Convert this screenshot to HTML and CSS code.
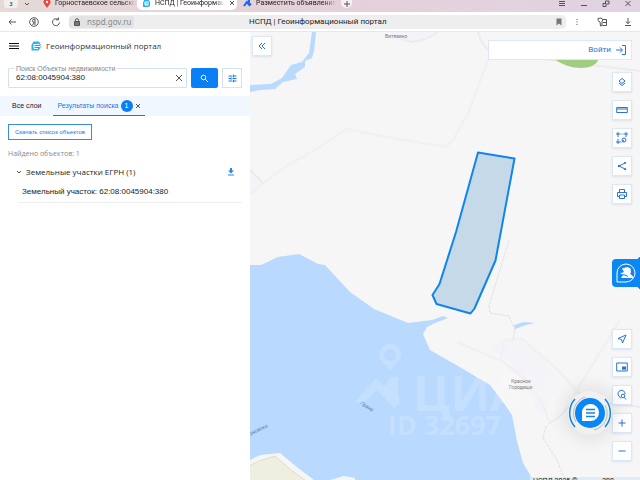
FILE: index.html
```html
<!DOCTYPE html>
<html lang="ru">
  <head>
    <meta charset="UTF-8" />
    <meta name="viewport" content="width=device-width, initial-scale=1.0" />
    <title>НСПД | Геоинформационный портал</title>
    <link rel="stylesheet" href="styles.css">
  </head>
  <body>
    <div class="tab-strip">
      <button class="tab-count">3</button>
      <button class="tab-list" aria-label="Список вкладок">
        <svg width="6" height="6" viewBox="0 0 6 6"><path d="M1 2l2 2 2-2" /></svg>
      </button>
      <div class="browser-tab first">
        <svg class="favicon" width="8" height="9" viewBox="0 0 8 9"><path fill="#f0443a" d="M4 9L1.600 5.500A3.400 3.400 0 1 1 6.400 5.500z" /><circle cx="4" cy="3" r="1.200" fill="#fff" /></svg>
        <span>Горностаевское сельско</span>
      </div>
      <div class="browser-tab current">
        <svg class="favicon" width="9" height="9" viewBox="0 0 9 9"><path fill="#27b5ee" d="M2 1h5l1 2v4L6 8H1V4z" /><path stroke="#fff" fill="none" d="M3 3h4M3 5h4M3 3v3h3" /></svg>
        <span>НСПД | Геоинформац</span>
        <button aria-label="Закрыть вкладку"><svg width="6" height="6" viewBox="0 0 6 6"><path d="M1 1l4 4M5 1l-4 4" /></svg></button>
      </div>
      <div class="browser-tab last">
        <svg class="favicon" width="9" height="9" viewBox="0 0 9 9"><path fill="none" stroke="#1769f5" stroke-width="2" d="M1 7l3-4 3 4M6 1v3l2 2" /></svg>
        <span>Разместить объявление</span>
      </div>
      <button class="new-tab" aria-label="Новая вкладка"><svg width="8" height="8" viewBox="0 0 8 8"><path d="M4 1v6M1 4h6" /></svg></button>
      <div class="window-buttons">
        <button aria-label="Меню"><svg width="8" height="8" viewBox="0 0 8 8"><path d="M1 1.500h6M1 3.500h6M1 5.500h6" /></svg></button>
        <button aria-label="Свернуть"><svg width="8" height="8" viewBox="0 0 8 8"><path d="M1 5.500h6" /></svg></button>
        <button aria-label="Окно"><svg width="8" height="8" viewBox="0 0 8 8"><path d="M1 3.500h3v3H1zM3.500 3V1H7v3H4.500" /></svg></button>
        <button aria-label="Закрыть"><svg width="8" height="8" viewBox="0 0 8 8"><path d="M1.500 1l5 5M6.500 1l-5 5" /></svg></button>
      </div>
    </div>

    <div class="toolbar">
      <button aria-label="Назад"><svg width="10" height="10" viewBox="0 0 10 10"><path d="M9 5H2M4.500 2.500L2 5l2.500 2.500" /></svg></button>
      <button aria-label="Яндекс"><svg width="10" height="10" viewBox="0 0 10 10"><circle cx="5" cy="5" r="4.300" /><path d="M6 8V2.300H5a1.500 1.500 0 0 0 0 3h1M5 5.300L3.600 8" /></svg></button>
      <button aria-label="Обновить"><svg width="10" height="10" viewBox="0 0 10 10"><path d="M8.500 5.500A3.500 3.500 0 1 1 7 2.300M7.500 0.500v2.300H5" /></svg></button>
      <div class="address">
        <div class="host">
          <svg width="8" height="8" viewBox="0 0 8 8"><path fill="#777" d="M1.500 3.500h5V7.500h-5z" /><path d="M2.500 4V2.200a1.500 1.500 0 0 1 3 0V4" /></svg>
          <input type="text" value="nspd.gov.ru" aria-label="Адрес">
        </div>
        <span class="page-title">НСПД | Геоинформационный портал</span>
        <svg class="bookmark" width="6" height="8" viewBox="0 0 6 8"><path d="M0.500 0.500h5v7L3 5.500.5 7.500z" /></svg>
      </div>
      <button aria-label="Ещё"><svg width="8" height="8" viewBox="0 0 8 8"><path class="dots" d="M3.500 1h1v1h-1zM3.500 3.500h1v1h-1zM3.500 6h1v1h-1z" /></svg></button>
      <button class="extensions" aria-label="Расширения"><svg width="11" height="10" viewBox="0 0 11 10"><path d="M1 1.500l3-.5 2 1.500-1 2v4L3.500 9 3 5 1 3.500zM6 2.500h3.500v6H5.500M6 5.500h3.500" /></svg></button>
      <button aria-label="Загрузки"><svg width="8" height="8" viewBox="0 0 8 8"><path d="M4 0v5.500M1.800 3.500L4 5.700l2.200-2.200M1 7.500h6" /></svg></button>
    </div>

    <div class="portal">
      <aside class="sidebar">
        <header class="brand">
          <button aria-label="Меню"><svg class="burger" width="10" height="8" viewBox="0 0 10 8"><path d="M0 1.500h10M0 4h10M0 6.500h10" /></svg></button>
          <svg class="logo" width="10" height="10" viewBox="0 0 10 10"><path fill="#24baf0" d="M2.500.5H8L9.500 3v4L7.500 9.500H.5V4z" /><path fill="none" stroke="#fff" d="M3 3.500h5.500M3.500 5.500H9M3 3v4.500h4" /><path fill="none" stroke="#188be8" stroke-width=".6" d="M4.500 4.500h4M4.500 6.500h3.500" /></svg>
          <h1>Геоинформационный портал</h1>
        </header>

        <form class="search">
          <div class="search-field">
            <label for="query">Поиск Объекты недвижимости</label>
            <input id="query" type="text" value="62:08:0045904:380">
            <button type="button" aria-label="Очистить"><svg width="8" height="8" viewBox="0 0 8 8"><path d="M1 1l6 6M7 1L1 7" /></svg></button>
          </div>
          <button type="button" class="search-button" aria-label="Найти"><svg width="9" height="9" viewBox="0 0 9 9"><circle cx="3.500" cy="3.500" r="2.300" /><path d="M5.300 5.300L8 8" /></svg></button>
          <button type="button" class="filter-button" aria-label="Фильтр"><svg width="9" height="9" viewBox="0 0 9 9"><path d="M.5 2h4M6 2h2.500M5.500.7v2.600M.5 4.500H3M4.500 4.500h4M3 3.200v2.600M.5 7h4M6 7h2.500M5.500 5.700v2.600" /></svg></button>
        </form>

        <nav class="panel-tabs">
          <a href="#layers">Все слои</a>
          <div class="panel-tab active">
            <a href="#results">Результаты поиска</a>
            <span class="badge">1</span>
            <button aria-label="Закрыть"><svg width="6" height="6" viewBox="0 0 6 6"><path d="M1 1l4 4M5 1L1 5" /></svg></button>
          </div>
        </nav>

        <section class="results" id="results">
          <button class="download-list">Скачать список объектов</button>
          <p class="found">Найдено объектов: 1</p>
          <div class="group">
            <button aria-label="Свернуть группу"><svg width="6" height="6" viewBox="0 0 6 6"><path d="M1 2l2 2 2-2" /></svg></button>
            <h2>Земельные участки ЕГРН (1)</h2>
            <button class="download" aria-label="Скачать"><svg width="8" height="8" viewBox="0 0 8 8"><path d="M3 0h2v2.500h2L4 5.500 1 2.500h2zM1 6.500h6v1H1z" /></svg></button>
          </div>
          <a class="parcel-link" href="#parcel">Земельный участок: 62:08:0045904:380</a>
        </section>
      </aside>

      <main class="map">
        <svg class="map-canvas" viewBox="250 32 390 448" preserveAspectRatio="xMinYMin slice">
          <!-- кварталы -->
          <path class="block" d="M250 168l13 14-13 10zM390 32h44l-10 9-14 2-18-4zM502 340l16-2 22 18 20 22-8 24-10 14-20-32-10-22-22-12z" />
          <!-- дороги: кромка и полотно -->
          <path id="roads" class="road" d="M250 194l13-11 25-18 29-16 29-20 47 9 53 9 8-8 15-28 25-67M250 170l13 13M400 38l12 4 14-3 12-7M478 32q4 16 16 21l146 18M457 342l45 19 22 17 16 21 10 24M500 361l5-21 16-2 40 35 20 22M620 320l-46 75M548 424l10-6 14-15M609 403l31 4" />
          <path class="road-inner" d="M250 194l13-11 25-18 29-16 29-20 47 9 53 9 8-8 15-28 25-67M457 342l45 19 22 17 16 21 10 24M500 361l5-21 16-2 40 35 20 22M620 320l-46 75" />
          <path class="track" d="M509 240l-20 66 1 7 19 3 6 14-2 10M546 426l-3 12 14 22 8 20" />
          <!-- вода -->
          <path class="water" d="M312 32h4l-2 19-2 7-7 3 0 6-10 7 2 5-14 3-8 7-15 1-10 2v-7l21-1 11-6 9-13 11-3 7-9z" />
          <path class="water" d="M250 265H261L278 257 299 254 318 264 325 265 350 292 374 309 408 323 432 320 443 316 448 318 435 323 427 327 423 334 430 350 458 366 490 385 503 402 512 415 517 441 523 463 533 480H250z" />
          <path class="water" d="M514 325l10-3 11 1-9 2-11 4z" />
          <path class="shore" d="M250 460l10-5 20-2 18 15 16 12h-64zM330 480l14-4 11 2v2z" />
          <path class="field" d="M249 466l10-5 16-5 15 13 16 12h-57z" />
          <path class="wood" d="M554 59h45q-4 9-18 9-14 0-27-9z" />
          <!-- участок -->
          <path class="parcel" d="M478 152.500l36.500 6-19 102-21 48-4 5-34-9.500-4-9 7-11L456 232z" />
          <text class="place" x="385" y="38">Витязино</text>
          <text class="place" x="511" y="383">Красное</text>
          <text class="place" x="509" y="389">Городище</text>
          <text class="river" x="360" y="404" transform="rotate(33 360 404)">Прана</text>
          <text class="river" x="251" y="435" transform="rotate(-26 251 435)">рковска</text>
          <g class="watermark">
            <path fill-rule="evenodd" d="M390 344a11 11 0 0 1 11 11c0 6-6 8-11 16-5-8-11-10-11-16a11 11 0 0 1 11-11zM390 349a6 6 0 1 0 .1 0z" />
            <path d="M355 402l21-24 9 8 4-6v-3h9v18l2 7-5 7-18-19-14 14z" />
            <text class="mark-name" x="413" y="411">ЦИАН</text>
            <text class="mark-id" x="388" y="435">ID 32697</text>
          </g>
        </svg>

        <button class="tool collapse" aria-label="Скрыть панель"><svg viewBox="0 0 12 12"><path d="M6 3L3 6l3 3M9 3L6 6l3 3" /></svg></button>

        <div class="login">
          <a href="#login">Войти <svg width="12" height="12" viewBox="0 0 12 12"><path d="M1 6h6M5 3.500L7.500 6 5 8.500M7 1.500h3.500v9H7" /></svg></a>
        </div>

        <div class="tools top">
          <button class="tool" aria-label="Слои"><svg viewBox="0 0 12 12"><path d="M6 2.500L9 5 6 7.500 3 5zM3 7l3 2.500L9 7" /></svg></button>
          <button class="tool" aria-label="Линейка"><svg viewBox="0 0 12 12"><path d="M.7 3.500h10.600v5H.7zM1 5h10" /></svg></button>
          <button class="tool" aria-label="Выделение"><svg viewBox="0 0 12 12"><path d="M1 1h2v2H1zM9 1h2v2H9zM1 9h2v2H1zM4.500 2h1M6.500 2h1M2 4v1M2 7v1M10 4v1M4 10h1M6 10.500L8 8" /><circle cx="8" cy="8" r="2" /></svg></button>
          <button class="tool" aria-label="Поделиться"><svg viewBox="0 0 12 12"><path d="M9 3L3 6l6 3" /><path class="solid" d="M8.300 2h1.800v1.800H8.300zM2 5.100h1.800v1.800H2zM8.300 8.200h1.800V10H8.300z" /></svg></button>
          <button class="tool" aria-label="Печать"><svg viewBox="0 0 12 12"><path d="M3.500 4V1.500h5V4M3.500 8.500h-2V4.500h9v4h-2M3.500 7h5v3.500h-5z" /></svg></button>
        </div>

        <button class="assistant" aria-label="Помощник">
          <svg width="20" height="20" viewBox="0 0 20 20"><path class="outline" d="M1 19V10a9 9 0 1 1 9 9z" /><path class="bear" d="M6 5.500l5.500-1.500 3 1.500.5 4-1 1 3 3v1.500H5l2-3-3-1.500 4-1.500z" /><path class="cut" d="M4 11.500l5 .5 3 1.500" /></svg>
        </button>

        <div class="tools bottom">
          <button class="tool" aria-label="Моё местоположение"><svg viewBox="0 0 12 12"><path d="M10 2L2 5.500l3.500 1L6.500 10z" /></svg></button>
          <button class="tool" aria-label="Обзорная карта"><svg viewBox="0 0 12 12"><path d="M.7 2h10.600v8H.7z" /><path class="solid" d="M6 5.500h4v3.200H6z" /></svg></button>
          <button class="tool" aria-label="Поиск на карте"><svg viewBox="0 0 12 12"><path d="M5 9.500L2.800 7A3.500 3.500 0 1 1 9 5M8.500 8.500L10 10.500" /><circle cx="7" cy="7" r="1.800" /></svg></button>
          <button class="tool" aria-label="Приблизить"><svg viewBox="0 0 12 12"><path d="M6 2.500v7M2.500 6h7" /></svg></button>
          <button class="tool" aria-label="Отдалить"><svg viewBox="0 0 12 12"><path d="M2.500 6h7" /></svg></button>
        </div>

        <button class="chat" aria-label="Чат поддержки">
          <svg width="44" height="44" viewBox="0 0 44 44">
            <path class="ring-grey" d="M8 31A17 17 0 0 1 17 6M26 39A17 17 0 0 0 37 14" />
            <path class="ring" d="M7 36A21 21 0 0 1 7 8M37 8A21 21 0 0 1 37 36" />
            <circle class="disc" cx="22" cy="22" r="15" />
            <path class="bubble" d="M14 30v-8a8.500 8.500 0 1 1 8.500 8z" />
            <path class="ring" d="M18 18.500h9M18 22h9M18 25.500h9" />
          </svg>
        </button>

        <footer class="map-footer"><span>НСПД 2025 ©</span><span>200</span></footer>
      </main>
    </div>
  </body>
</html>
```
FILE: styles.css
```css
* {
  box-sizing: border-box;
}

body {
  margin: 0;
  height: 100vh;
  display: flex;
  flex-direction: column;
  overflow: hidden;
  font-family: Roboto, "Liberation Sans", sans-serif;
  font-size: 8px;
  line-height: 12px;
  color: #222;
  background: #fff;
}

button {
  display: flex;
  align-items: center;
  justify-content: center;
  padding: 0;
  border: none;
  background: none;
  font: inherit;
  color: inherit;
  cursor: pointer;
}

input {
  min-width: 0;
  padding: 0;
  border: none;
  outline: none;
  background: none;
  font: inherit;
  color: inherit;
}

a {
  color: inherit;
  text-decoration: none;
}

svg {
  flex-shrink: 0;
}

button svg,
.host svg {
  fill: none;
  stroke: #555;
}

/* Браузер */
.tab-strip {
  display: flex;
  align-items: flex-start;
  flex: 0 0 12px;
  overflow: hidden;
  background: linear-gradient(90deg, #e5dad8, #e5d0d9 50%, #e1d3e3);
  font-size: 7px;
  line-height: 6px;
}

.tab-count {
  width: 14px;
  height: 8px;
  margin-left: 4px;
  border-radius: 0 0 3px 3px;
  background: #f3eeee;
  font-size: 6px;
}

.tab-list {
  width: 14px;
  height: 7px;
  margin-right: 9px;
  margin-left: 2px;
}

.browser-tab {
  display: flex;
  align-items: center;
  gap: 4px;
  height: 10px;
  padding-bottom: 4px;
}

.browser-tab span {
  flex: 1;
  white-space: nowrap;
  line-height: 12px;
  mask-image: linear-gradient(90deg, #000 85%, transparent);
}

.browser-tab.first {
  width: 90px;
}

.browser-tab.current {
  width: 100px;
  margin-left: 4px;
  padding-right: 5px;
  padding-left: 5px;
  border-radius: 0 0 5px 5px;
  background: #fff;
}

.browser-tab.last {
  width: 91px;
  margin-left: 6px;
}

.new-tab {
  width: 11px;
  height: 8px;
  margin-left: 7px;
  border-radius: 0 0 5px 5px;
  background: #f6eff3;
}

.window-buttons {
  display: flex;
  gap: 14px;
  margin-right: 8px;
  margin-left: auto;
}

.toolbar {
  display: flex;
  align-items: center;
  gap: 12px;
  flex: 0 0 20px;
  padding: 0 8px 0 7px;
  border-bottom: 1px solid #e8e8e8;
}

.address {
  display: flex;
  align-items: center;
  flex: 1;
  height: 14px;
  margin-right: -5px;
  margin-left: -4px;
  padding-right: 4px;
  border-radius: 4px;
  background: #eee;
}

.host {
  display: flex;
  align-items: center;
  gap: 6px;
  width: 65px;
  height: 12px;
  padding-left: 4px;
  border-radius: 3px;
  background: #e3e3e3;
  font-family: "Noto Sans", sans-serif;
  color: #888;
}

.host input {
  width: 47px;
}

.page-title {
  flex: 1;
  padding-left: 115px;
  white-space: nowrap;
}

.bookmark {
  fill: #777;
}

button .dots {
  fill: #555;
  stroke: none;
}

.extensions {
  margin: 0 4px;
}

/* Панель */
.portal {
  display: flex;
  flex: 1;
  min-height: 0;
}

.sidebar {
  flex: 0 0 250px;
  background: #fff;
}

.brand {
  display: flex;
  align-items: center;
  height: 28px;
  padding-left: 9px;
}

.brand .burger {
  stroke: #111;
}

.logo {
  margin-right: 5px;
  margin-left: 12px;
}

.brand h1 {
  margin: 0;
  font-family: "Open Sans", sans-serif;
  font-size: 8px;
  font-weight: 400;
  color: #333;
}

.search {
  display: flex;
  gap: 4px;
  padding: 8px;
}

.search-field {
  position: relative;
  display: flex;
  align-items: center;
  flex: 1;
  height: 20px;
  padding: 0 3px 0 7px;
  border: 1px solid #d3e1f2;
  border-radius: 1px;
}

.search-field label {
  position: absolute;
  top: -4px;
  left: 5px;
  padding: 0 2px;
  background: #fff;
  font-family: "Liberation Sans", sans-serif;
  font-size: 7px;
  line-height: 8px;
  color: #888;
}

.search-field input {
  flex: 1;
  font-family: "Liberation Sans", sans-serif;
}

.search-button {
  width: 27px;
  border-radius: 2px;
  background: #0a7ff5;
}

.search-button svg {
  stroke: #fff;
}

.filter-button {
  width: 20px;
  border: 1px solid #d3e1f2;
}

.filter-button svg {
  stroke: #2678e0;
}

.panel-tabs {
  display: flex;
  gap: 12px;
  height: 20px;
  padding-left: 12px;
  line-height: 20px;
  font-family: "Liberation Sans", sans-serif;
  font-size: 7px;
  background: #f0f7ff;
}

.panel-tab {
  display: flex;
  align-items: center;
  gap: 2px;
  padding: 0 4px 0 4px;
  border-bottom: 1px solid #1478e6;
  color: #1478e6;
}

.badge {
  width: 12px;
  height: 12px;
  border-radius: 50%;
  background: #0a7ff5;
  line-height: 12px;
  text-align: center;
  color: #fff;
}

.results {
  padding: 8px;
}

.download-list {
  height: 16px;
  padding: 0 6px;
  border: 1px solid #3b89e6;
  font-family: "Liberation Sans", sans-serif;
  font-size: 6px;
  color: #1478e6;
}

.found {
  margin: 8px 0 6px;
  font-family: "Open Sans", sans-serif;
  font-size: 7px;
  color: #888;
}

.group {
  display: flex;
  align-items: center;
  gap: 4px;
  padding: 0 7px 0 8px;
}

.group h2 {
  flex: 1;
  margin: 0;
  font-family: "Open Sans", sans-serif;
  font-size: 8px;
  font-weight: 400;
}

button.download svg {
  fill: #2d86ec;
  stroke: none;
}

.parcel-link {
  display: block;
  margin-left: 10px;
  padding: 8px 0 4px 4px;
  border-bottom: 1px solid #eee;
  font-family: "Liberation Sans", sans-serif;
}

/* Карта */
.map {
  position: relative;
  flex: 1;
  min-width: 0;
  overflow: hidden;
  background: #f6f6f6;
}

.map-canvas {
  position: absolute;
  width: 100%;
  height: 100%;
}

.water {
  fill: #b9d9ff;
}

.shore {
  fill: #f6f6f6;
}

.field {
  fill: #eeefde;
  stroke: #e0dccf;
}

.wood {
  fill: #a1cd82;
}

.block {
  fill: #f4f4f8;
}

.road {
  fill: none;
  stroke: #ececee;
  stroke-width: 2;
}

.road-inner {
  fill: none;
  stroke: #f5f5f6;
}

.track {
  fill: none;
  stroke: #e0e0e0;
  stroke-dasharray: 3 1;
}

.parcel {
  fill: #c6d9e8;
  stroke: #1084ee;
  stroke-width: 2;
  stroke-linejoin: round;
}

.place {
  font-size: 5px;
  fill: #777;
}

.river {
  font-size: 5px;
  font-style: italic;
  fill: #5478ab;
}

.watermark {
  font-family: "Open Sans", sans-serif;
  font-weight: 700;
  fill: #fff;
  opacity: 0.16;
}

.mark-name {
  font-size: 48px;
}

.mark-id {
  font-size: 27px;
}

.tool {
  width: 20px;
  height: 20px;
  border: 1px solid #dbe8f7;
  background: #fff;
  box-shadow: 0 1px 2px rgba(60, 90, 130, 0.12);
}

.tool svg {
  width: 12px;
  height: 12px;
  stroke: #2873d3;
}

.tool .solid {
  fill: #2873d3;
  stroke: none;
}

.collapse {
  position: absolute;
  top: 4px;
  left: 2px;
}

.login {
  position: absolute;
  top: 8px;
  right: 8px;
  display: flex;
  justify-content: flex-end;
  width: 144px;
  height: 20px;
  padding-right: 4px;
  border: 1px solid #dbe8f7;
  background: #fff;
}

.login a {
  display: flex;
  align-items: center;
  gap: 4px;
  color: #2873d3;
}

.login svg {
  fill: none;
  stroke: #2873d3;
}

.tools {
  position: absolute;
  right: 8px;
  display: flex;
  flex-direction: column;
  gap: 8px;
}

.tools.top {
  top: 40px;
}

.tools.bottom {
  bottom: 19px;
}

.assistant {
  position: absolute;
  top: 227px;
  right: 0;
  width: 28px;
  height: 28px;
  border-radius: 4px 0 0 4px;
  background: #0a86f5;
}

.assistant .outline {
  stroke: #fff;
}

.assistant .bear {
  fill: #fff;
  stroke: none;
}

.assistant .cut {
  stroke: #0a86f5;
}

.assistant::before,
.assistant::after {
  content: "";
  position: absolute;
  right: 0;
  width: 4px;
  height: 4px;
}

.assistant::before {
  top: -4px;
  background: radial-gradient(circle at 0 0, transparent 4px, #0a86f5 4px);
}

.assistant::after {
  bottom: -4px;
  background: radial-gradient(circle at 0 100%, transparent 4px, #0a86f5 4px);
}

.chat {
  position: absolute;
  right: 28px;
  bottom: 45px;
  border-radius: 50%;
  background: #f0f0f0;
  box-shadow: 0 0 16px 6px rgba(0, 0, 0, 0.08);
}

.chat .disc {
  fill: #0a86f5;
  stroke: none;
}

.chat .bubble {
  fill: #fff;
  stroke: none;
}

.ring {
  stroke: #1682e8;
  stroke-width: 1.5;
}

.ring-grey {
  stroke: #bbb;
}

.map-footer {
  position: absolute;
  right: 0;
  bottom: 0;
  display: flex;
  justify-content: space-between;
  width: 110px;
  height: 3px;
  padding: 0 26px 0 3px;
  overflow: hidden;
  background: #dfebf5;
  font-size: 7px;
  line-height: 8px;
}
```
